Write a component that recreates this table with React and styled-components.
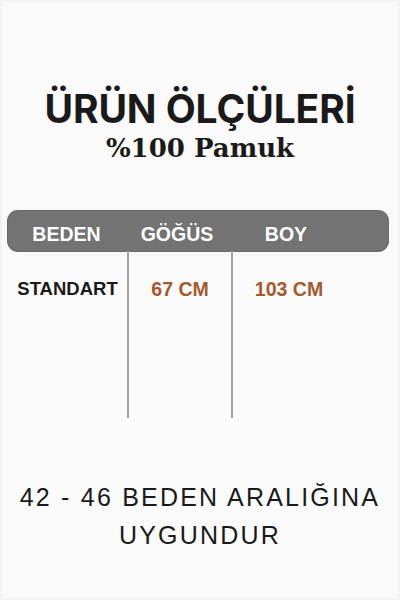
import React from "react";
import styled, { createGlobalStyle } from "styled-components";

const Global = createGlobalStyle`
  html, body { margin: 0; padding: 0; background: #fafafa; }
`;

const Page = styled.div`
  box-sizing: border-box;
  width: 400px;
  height: 600px;
  background: #fafafa;
  border: 2px solid #f1f1f1;
  display: flex;
  flex-direction: column;
  align-items: stretch;
  padding-top: 84px;
`;

const Title = styled.h1`
  margin: 0;
  text-align: center;
  font-family: Inter, "Liberation Sans", sans-serif;
  font-weight: 700;
  font-size: 39px;
  line-height: 46px;
  color: #1a1a1a;
  letter-spacing: -0.1px;
`;

const Subtitle = styled.div`
  margin-top: 2px;
  text-align: center;
  font-family: "DejaVu Serif", "Liberation Serif", serif;
  font-weight: 700;
  font-size: 26px;
  line-height: 29px;
  color: #1a1a1a;
`;

const Table = styled.div`
  margin: 48px 10px 0 6px;
`;

const cols = "119px 104px 114px 1fr";

const HeaderBar = styled.div`
  display: grid;
  grid-template-columns: ${cols};
  align-items: center;
  height: 40px;
  box-sizing: border-box;
  padding-top: 7px;
  background: #737373;
  border-radius: 10px;
  box-shadow: 0 0 0 1px #6a6a6a;
`;

const HeadCell = styled.div`
  text-align: center;
  font-family: "Liberation Sans", Arial, sans-serif;
  font-weight: 700;
  font-size: 19.5px;
  color: #ffffff;
  transform: translateX(${(p) => p.$shift || 0}px);
`;

const Body = styled.div`
  display: grid;
  grid-template-columns: ${cols};
  height: 167px;
`;

const Cell = styled.div`
  box-sizing: border-box;
  padding-top: 27px;
  text-align: center;
  border-left: ${(p) => (p.$divider ? "2px solid #a3a3a3" : "none")};
  font-family: "Liberation Sans", Arial, sans-serif;
  font-weight: 700;
  font-size: ${(p) => (p.$accent ? "19.5px" : "18.5px")};
  line-height: 22px;
  color: ${(p) => (p.$accent ? "#a65a2c" : "#1a1a1a")};
`;

const Note = styled.p`
  margin: 60px 0 0;
  text-align: center;
  font-family: "Liberation Sans", Arial, sans-serif;
  font-weight: 400;
  font-size: 25px;
  line-height: 38px;
  letter-spacing: 2.2px;
  color: #1a1a1a;
`;

export default function App() {
  return (
    <>
      <Global />
      <Page>
        <Title>ÜRÜN ÖLÇÜLERİ</Title>
        <Subtitle>%100 Pamuk</Subtitle>
        <Table>
          <HeaderBar>
            <HeadCell $shift={-1}>BEDEN</HeadCell>
            <HeadCell $shift={-2}>GÖĞÜS</HeadCell>
            <HeadCell $shift={-2}>BOY</HeadCell>
            <div />
          </HeaderBar>
          <Body>
            <Cell>STANDART</Cell>
            <Cell $divider $accent>67 CM</Cell>
            <Cell $divider $accent>103 CM</Cell>
            <div />
          </Body>
        </Table>
        <Note>
          42 - 46 BEDEN ARALIĞINA
          <br />
          UYGUNDUR
        </Note>
      </Page>
    </>
  );
}
